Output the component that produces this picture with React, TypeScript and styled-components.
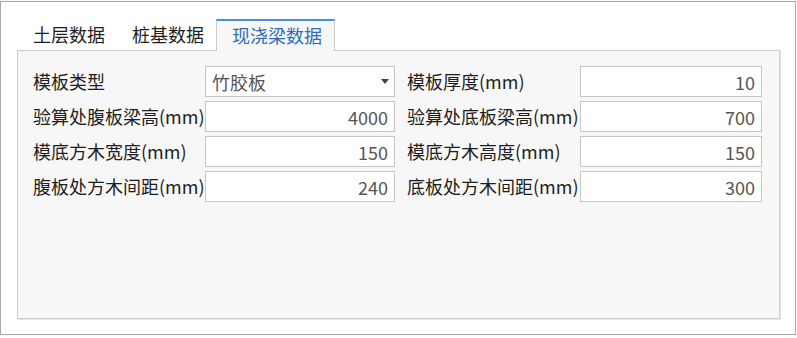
import styled, { createGlobalStyle } from 'styled-components';

const GlobalStyle = createGlobalStyle`
  html, body {
    margin: 0;
    padding: 0;
    background: #ffffff;
  }
  body {
    font-family: "Noto Sans CJK SC", "Noto Sans", sans-serif;
  }
  * {
    box-sizing: border-box;
  }
`;

const Frame = styled.div`
  width: 796px;
  height: 334px;
  margin-top: 1px;
  border: 1px solid #a9a9a9;
  padding: 17px 15px 15px 16px;
  display: flex;
  flex-direction: column;
`;

const TabBar = styled.div`
  display: flex;
  align-items: flex-end;
  height: 32px;
  padding-left: 1px;
  margin-bottom: -1px;
  position: relative;
  z-index: 1;
`;

const Tab = styled.div<{ $active?: boolean }>`
  height: 32px;
  padding: 0 12px 2px 15px;
  display: flex;
  align-items: center;
  font-size: 18px;
  color: ${(p) => (p.$active ? '#2d6db5' : '#1e1e1e')};
  background: ${(p) => (p.$active ? '#f7f7f7' : 'transparent')};
  border: ${(p) => (p.$active ? '1px solid #cdcdcd' : 'none')};
  border-top: ${(p) => (p.$active ? '2px solid #4a8fd6' : 'none')};
  border-bottom: none;
  white-space: nowrap;
`;

const Panel = styled.div`
  flex: 1;
  background: #f7f7f7;
  border: 1px solid #cdcdcd;
  box-shadow: 1px 1px 0 #e6e6e6;
  padding: 15px 0 0 15px;
`;

const FieldGrid = styled.div`
  display: grid;
  grid-template-columns: 172px 190px 185px 182px;
  grid-auto-rows: 31px;
  row-gap: 4px;
  align-items: center;
`;

const Label = styled.div<{ $indent?: number }>`
  font-size: 18px;
  color: #1e1e1e;
  padding-left: ${(p) => p.$indent ?? 0}px;
  white-space: nowrap;
  line-height: 31px;
`;

const Input = styled.div`
  height: 31px;
  background: #ffffff;
  border: 1px solid #c6c6c6;
  display: flex;
  align-items: center;
  justify-content: flex-end;
  padding-right: 6px;
  font-size: 18px;
  color: #555555;
`;

const Select = styled.div`
  height: 31px;
  background: #ffffff;
  border: 1px solid #c6c6c6;
  display: flex;
  align-items: center;
  justify-content: space-between;
  padding: 0 5px 0 6px;
  font-size: 18px;
  color: #555555;
`;

const Caret = styled.span`
  width: 0;
  height: 0;
  border-left: 4.5px solid transparent;
  border-right: 4.5px solid transparent;
  border-top: 5px solid #444444;
`;

const rows: [string, string, string, string][] = [
  ['验算处腹板梁高(mm)', '4000', '验算处底板梁高(mm)', '700'],
  ['模底方木宽度(mm)', '150', '模底方木高度(mm)', '150'],
  ['腹板处方木间距(mm)', '240', '底板处方木间距(mm)', '300'],
];

export default function App() {
  return (
    <>
      <GlobalStyle />
      <Frame>
        <TabBar>
          <Tab>土层数据</Tab>
          <Tab>桩基数据</Tab>
          <Tab $active>现浇梁数据</Tab>
        </TabBar>
        <Panel>
          <FieldGrid>
            <Label>模板类型</Label>
            <Select>
              <span>竹胶板</span>
              <Caret />
            </Select>
            <Label $indent={12}>模板厚度(mm)</Label>
            <Input>10</Input>
            {rows.map(([l1, v1, l2, v2]) => (
              <>
                <Label key={l1}>{l1}</Label>
                <Input>{v1}</Input>
                <Label $indent={12}>{l2}</Label>
                <Input>{v2}</Input>
              </>
            ))}
          </FieldGrid>
        </Panel>
      </Frame>
    </>
  );
}
